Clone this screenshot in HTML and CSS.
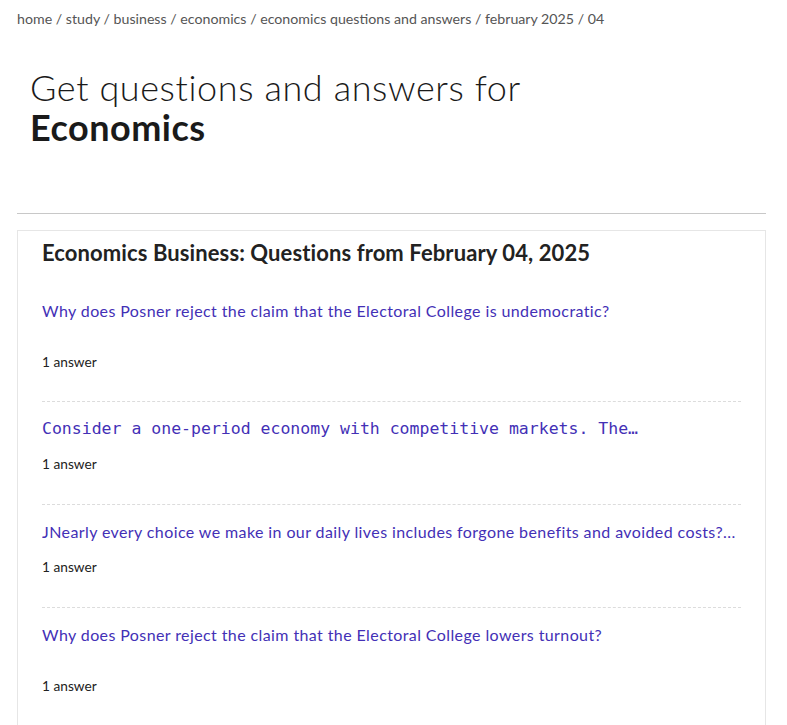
FILE: index.html
```html
<!DOCTYPE html>
<html lang="en">
<head>
    <meta charset="UTF-8">
    <meta name="viewport" content="width=device-width, initial-scale=1.0">
    <title>Economics questions and answers - February 04, 2025</title>
    <link rel="stylesheet" href="styles.css">
</head>
<body>
    <div class="breadcrumb">
        <a href="#">home</a> / <a href="#">study</a> / <a href="#">business</a> / <a href="#">economics</a> / <a href="#">economics questions and answers</a> / <a href="#">february 2025</a> / <span>04</span>
    </div>

    <h1 class="page-title">
        <span class="light">Get questions and answers for</span>
        <strong>Economics</strong>
    </h1>

    <hr class="divider">

    <div class="card">
        <h2>Economics Business: Questions from February 04, 2025</h2>

        <div class="question">
            <a href="#" class="q-link">Why does Posner reject the claim that the Electoral College is undemocratic?</a>
            <div class="answers spaced">1 answer</div>
        </div>

        <div class="question">
            <a href="#" class="q-link mono">Consider a one-period economy with competitive markets. The…</a>
            <div class="answers">1 answer</div>
        </div>

        <div class="question">
            <a href="#" class="q-link">JNearly every choice we make in our daily lives includes forgone benefits and avoided costs?...</a>
            <div class="answers">1 answer</div>
        </div>

        <div class="question">
            <a href="#" class="q-link">Why does Posner reject the claim that the Electoral College lowers turnout?</a>
            <div class="answers spaced">1 answer</div>
        </div>
    </div>
</body>
</html>
```

FILE: styles.css
```css
body {
    font-family: Lato, "Open Sans", Arial, sans-serif;
    margin: 0;
    padding: 0 21px 0 17px;
    background: #fff;
    color: #222;
}
a {
    text-decoration: none;
    color: inherit;
}
.breadcrumb {
    padding-top: 10px;
    font-size: 14.2px;
    line-height: 18px;
    color: #555;
}
.page-title {
    margin: 39px 0 0 13px;
    font-size: 36px;
    line-height: 40px;
    color: #1a1a1a;
}
.page-title .light {
    display: block;
    font-weight: 300;
    letter-spacing: 0.6px;
}
.page-title strong {
    display: block;
    font-weight: 700;
    letter-spacing: 0.5px;
}
.divider {
    margin: 66px 0 16px;
    border: none;
    border-top: 1px solid #c8c8c8;
}
.card {
    border: 1px solid #e6e6e6;
    padding: 9px 24px 0;
}
.card h2 {
    margin: 0 0 18px;
    font-size: 22px;
    letter-spacing: 0.1px;
    line-height: 26px;
    font-weight: 700;
    color: #222;
}
.question {
    padding: 16px 0 31px;
    border-bottom: 1px dashed #dcdcdc;
}
.question:first-of-type {
    padding-bottom: 30px;
}
.q-link {
    display: block;
    font-size: 16px;
    letter-spacing: 0.4px;
    line-height: 22px;
    color: #4330b6;
    white-space: nowrap;
    overflow: hidden;
    text-overflow: ellipsis;
}
.q-link.mono {
    font-family: "DejaVu Sans Mono", monospace;
    font-size: 16.5px;
    letter-spacing: 0;
}
.answers {
    margin-top: 15px;
    font-size: 13.7px;
    line-height: 18px;
    color: #222;
}
.answers.spaced {
    margin-top: 31px;
}
```
